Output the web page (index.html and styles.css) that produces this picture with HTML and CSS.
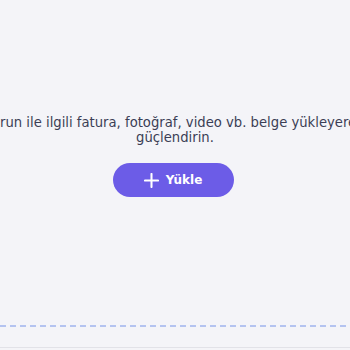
FILE: index.html
```html
<!DOCTYPE html>
<html lang="tr">
<head>
    <meta charset="UTF-8">
    <meta name="viewport" content="width=device-width, initial-scale=1.0">
    <title>Belge Yükle</title>
    <link rel="stylesheet" href="styles.css">
</head>
<body>
    <div class="upload">
        <p class="upload-text">Yaşadığın sorun ile ilgili fatura, fotoğraf, video vb. belge yükleyerek şikayetini güçlendirin.</p>
        <button class="upload-btn">
            <svg width="15" height="15" viewBox="0 0 16 16"><path d="M8 1v14M1 8h14" stroke="#fff" stroke-width="2.2" stroke-linecap="round"/></svg>
            Yükle
        </button>
    </div>
    <div class="divider"></div>
    <div class="footer"></div>
</body>
</html>
```

FILE: styles.css
```css
html, body {
    margin: 0;
    padding: 0;
    overflow: hidden;
}
body {
    font-family: "DejaVu Sans", sans-serif;
    background: #f4f4f8;
    color: #3b3e55;
    width: 350px;
    height: 350px;
}
.upload {
    width: 560px;
    margin-left: -105px;
    padding-top: 115px;
    display: flex;
    flex-direction: column;
    align-items: center;
}
.upload-text {
    margin: 0;
    font-size: 13.2px;
    line-height: 15px;
    text-align: center;
}
.upload-btn {
    margin-top: 18px;
    width: 121px;
    height: 34px;
    border: none;
    border-radius: 17px;
    background: #6c5ce7;
    color: #fff;
    font-family: "DejaVu Sans", sans-serif;
    font-weight: 700;
    font-size: 12px;
    display: flex;
    align-items: center;
    justify-content: center;
    gap: 7px;
    cursor: pointer;
    margin-left: -4px;
}
.divider {
    margin-top: 128px;
    height: 2px;
    background: repeating-linear-gradient(90deg, #b4c3f0 0 6px, transparent 6px 10px);
}
.footer {
    margin-top: 20px;
    height: 1px;
    background: #e2e2e8;
}
```
